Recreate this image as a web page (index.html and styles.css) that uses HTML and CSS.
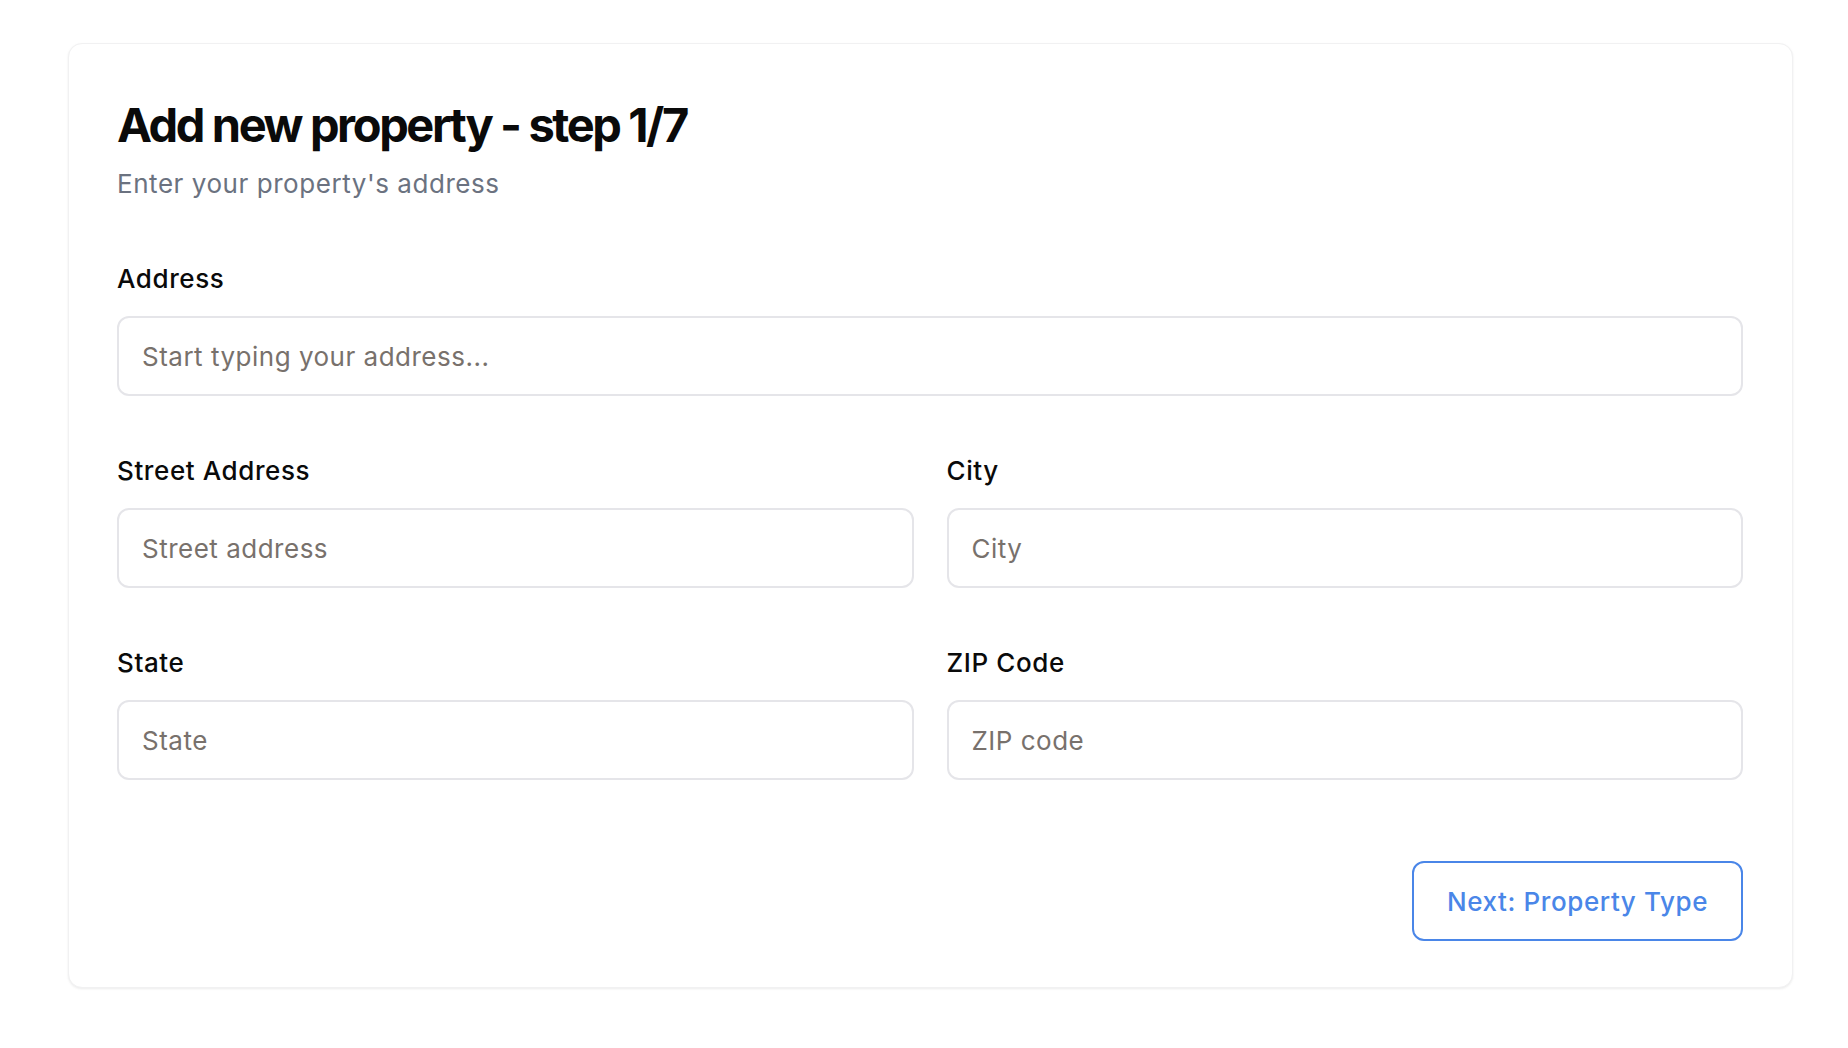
FILE: index.html
```html
<!DOCTYPE html>
<html lang="en">
<head>
<meta charset="utf-8">
<title>Add new property - step 1/7</title>
<link rel="stylesheet" href="styles.css">
</head>
<body>
<main class="page">
  <section class="card">
    <h1 class="title">Add new property - step 1/7</h1>
    <p class="subtitle">Enter your property's address</p>
    <form class="form">
      <div class="field full">
        <label class="label" for="address">Address</label>
        <input class="input" id="address" type="text" placeholder="Start typing your address...">
      </div>
      <div class="field">
        <label class="label" for="street">Street Address</label>
        <input class="input" id="street" type="text" placeholder="Street address">
      </div>
      <div class="field">
        <label class="label" for="city">City</label>
        <input class="input" id="city" type="text" placeholder="City">
      </div>
      <div class="field">
        <label class="label" for="state">State</label>
        <input class="input" id="state" type="text" placeholder="State">
      </div>
      <div class="field">
        <label class="label" for="zip">ZIP Code</label>
        <input class="input" id="zip" type="text" placeholder="ZIP code">
      </div>
    </form>
    <div class="actions">
      <button class="btn-next" type="button">Next: Property Type</button>
    </div>
  </section>
</main>
</body>
</html>
```

FILE: styles.css
```css
* { box-sizing: border-box; }

html, body {
  margin: 0;
  padding: 0;
  background: #ffffff;
}

body {
  font-family: Inter, "Noto Sans", "Liberation Sans", sans-serif;
  color: #0a0a0a;
}

.page {
  padding: 43px 55px 40px 68px;
}

.card {
  background: #ffffff;
  border: 1px solid #f1f1f2;
  border-radius: 14px;
  box-shadow: 0 1px 3px rgba(0, 0, 0, 0.05), 0 1px 2px rgba(0, 0, 0, 0.03);
  padding: 51px 49px 46px 48px;
}

.title {
  margin: 0;
  font-size: 47px;
  line-height: 60px;
  font-weight: 700;
  letter-spacing: -2.4px;
  color: #0a0a0a;
}

.subtitle {
  margin: 11px 0 0 0;
  font-size: 26px;
  line-height: 36px;
  letter-spacing: 0.55px;
  color: #6b7280;
}

.form {
  display: grid;
  grid-template-columns: 1fr 1fr;
  column-gap: 33px;
  row-gap: 57px;
  margin-top: 59px;
}

.field {
  display: flex;
  flex-direction: column;
}

.field.full {
  grid-column: 1 / -1;
}

.label {
  font-size: 26px;
  line-height: 36px;
  font-weight: 500;
  letter-spacing: 0.6px;
  color: #0a0a0a;
  margin-bottom: 19px;
}

.input {
  height: 80px;
  border: 2px solid #e5e5e9;
  border-radius: 12px;
  padding: 0 23px;
  font-family: inherit;
  font-size: 26px;
  letter-spacing: 0.5px;
  color: #0a0a0a;
  background: #ffffff;
  outline: none;
}

.input::placeholder {
  color: #78716c;
  opacity: 1;
}

.actions {
  display: flex;
  justify-content: flex-end;
  margin-top: 81px;
}

.btn-next {
  height: 80px;
  padding: 0 33px;
  border: 2px solid #4a86e8;
  border-radius: 12px;
  background: #ffffff;
  color: #4a86e8;
  font-family: inherit;
  font-size: 26px;
  font-weight: 500;
  letter-spacing: 0.6px;
  cursor: pointer;
}
```
